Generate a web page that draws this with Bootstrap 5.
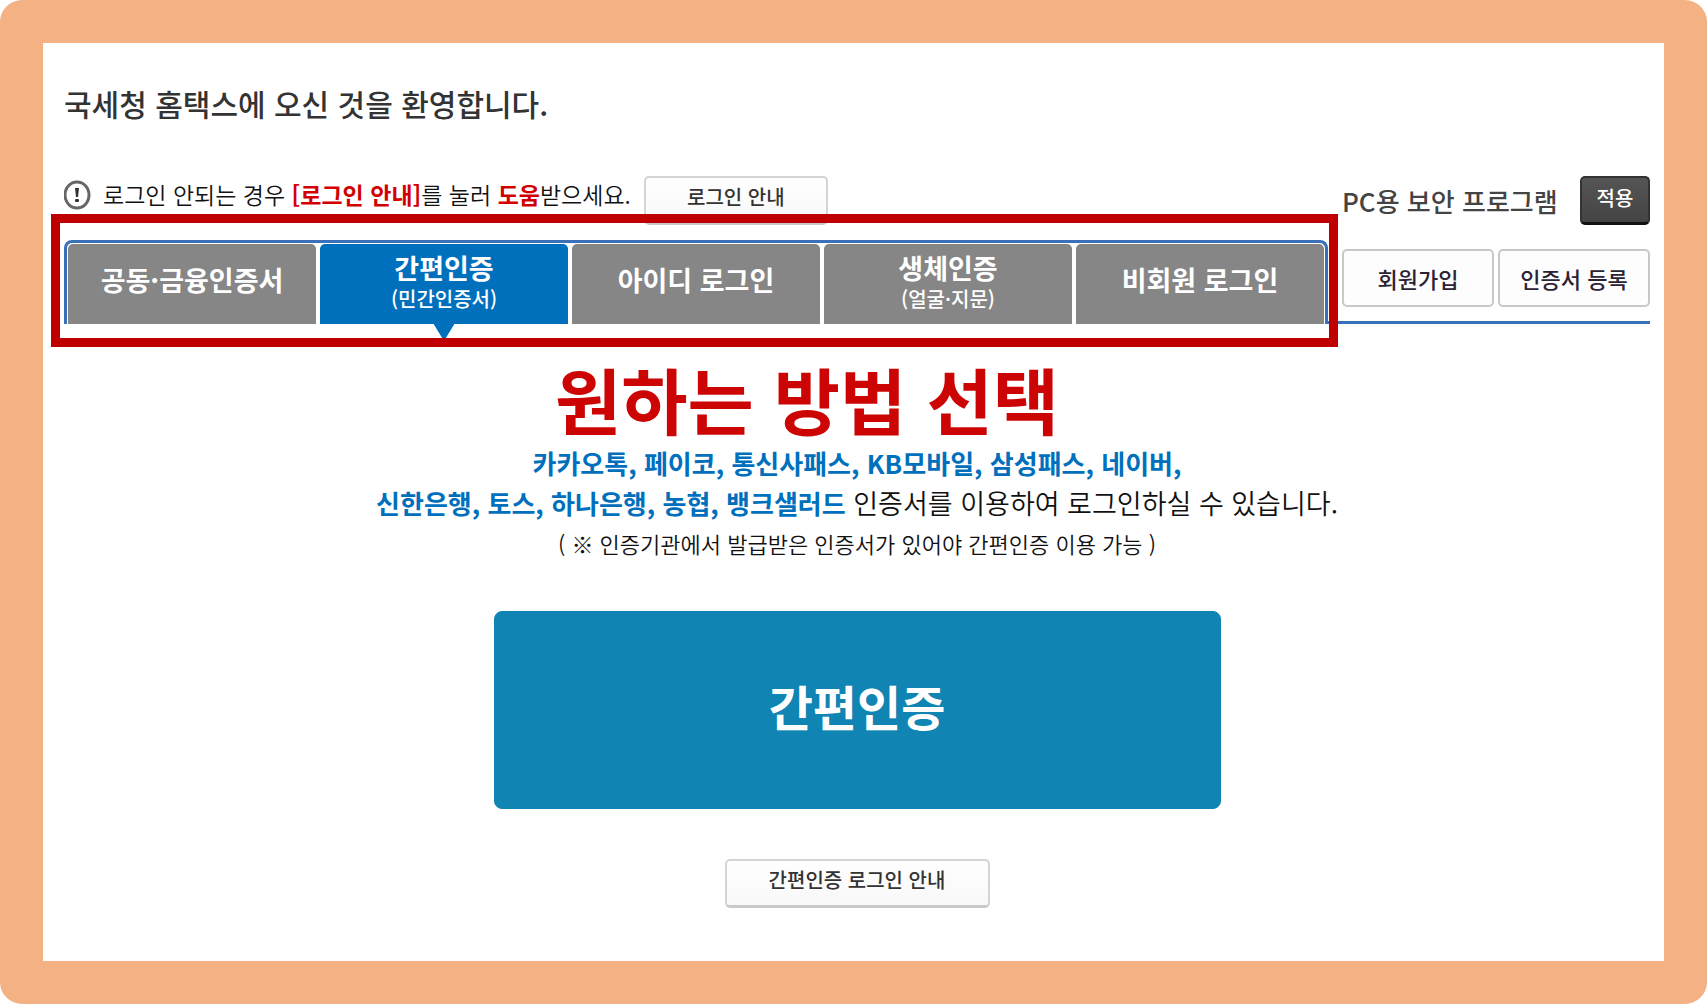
<!DOCTYPE html>
<html lang="ko">
<head>
<meta charset="utf-8">
<meta name="viewport" content="width=device-width, initial-scale=1">
<title>국세청 홈택스 로그인</title>
<link rel="stylesheet" href="https://cdn.jsdelivr.net/npm/bootstrap@5.3.0/dist/css/bootstrap.min.css">
<style>
  body { font-family: "Noto Sans CJK KR", sans-serif; color: #111; background: #fff; }
  .page-frame { border: 43px solid #f4b183; border-radius: 22px; padding: 40px 14px 48px 21px; }
  .page-title { font-size: 30px; line-height: 40px; font-weight: 500; color: #333; margin-bottom: 53px; }
  .notice-row { height: 48px; margin-bottom: 16px; }
  .notice-text { font-size: 23px; line-height: 36px; font-weight: 350; padding: 0 13px 0 10px; }
  .notice-text strong { color: #d20000; font-weight: 700; }
  .side-panel { flex: 0 0 322px; padding-left: 14px; border-bottom: 3px solid #3a70b7; }
  .side-label { font-size: 26px; line-height: 49px; font-weight: 500; color: #444; }

  .btn-plain { --bs-btn-font-size: 20px; --bs-btn-line-height: 28px; --bs-btn-font-weight: 500; --bs-btn-border-radius: 5px;
    --bs-btn-border-width: 2px; --bs-btn-color: #333; --bs-btn-border-color: #d4d4d4; --bs-btn-bg: #fdfdfd;
    --bs-btn-hover-bg: #f2f2f2; --bs-btn-hover-border-color: #bbb; --bs-btn-padding-y: 2px; }
  .btn-raised { height: 49px; padding-bottom: 8px; background-image: linear-gradient(#fff, #f8f8f8); border-bottom: 3px solid #c9c9c9; }
  .btn-side { --bs-btn-font-size: 22px; --bs-btn-padding-x: 0; --bs-btn-border-color: #c8c8c8; --bs-btn-color: #2b2233; height: 58px; }
  .btn-help { width: 184px; }
  .btn-guide { width: 265px; }
  .btn-apply { --bs-btn-font-size: 20px; --bs-btn-line-height: 28px; --bs-btn-font-weight: 500; --bs-btn-color: #fff; --bs-btn-hover-color: #fff;
    --bs-btn-border-color: #333; --bs-btn-hover-border-color: #222; --bs-btn-border-radius: 5px; --bs-btn-border-width: 2px; --bs-btn-padding-x: 0;
    width: 70px; height: 49px; padding-top: 2px; background-image: linear-gradient(#555, #444); border-bottom: 3px solid #111; }
  .btn-simple { --bs-btn-font-size: 48px; --bs-btn-line-height: 72px; --bs-btn-font-weight: 700; --bs-btn-color: #fff; --bs-btn-hover-color: #fff;
    --bs-btn-bg: #1084b2; --bs-btn-hover-bg: #0d759e; --bs-btn-border-color: #1084b2; --bs-btn-border-radius: 8px;
    width: 727px; height: 198px; padding-bottom: 16px; margin-top: 48px; margin-bottom: 50px; }

  .tab-box { height: 84px; border: 3px solid #3a70b7; border-bottom: 0; border-radius: 8px 8px 0 0; padding: 1px 1px 0; }
  .login-tabs { gap: 4px; height: 80px; }
  .login-tabs .nav-item { flex: 1 1 0; }
  .login-tabs .nav-link { height: 80px; padding: 0 0 8px; background: #868686; color: #fff; border-radius: 5px 5px 0 0; position: relative;
    font-size: 27px; line-height: 34px; font-weight: 700; }
  .login-tabs .nav-link.active { background: #0070bd; color: #fff; }
  .login-tabs .nav-link.active::after { content: ""; position: absolute; top: 79px; left: 50%; margin-left: -11px;
    border: 11px solid transparent; border-bottom: 0; border-top: 18px solid #0070bd; }
  .login-tabs .nav-link:has(.tab-note) { padding-bottom: 4px; }
  .tab-note { font-size: 20px; line-height: 28px; font-weight: 500; }
  .mark-frame { position: absolute; inset: -26px -10px -23px -13px; border: 9px solid #c00000; pointer-events: none; }

  .pick-text { font-size: 72px; line-height: 80px; font-weight: 700; color: #cc0404; margin: 34px 0 5px; padding-right: 100px; }
  .guide-text { font-size: 27px; line-height: 40px; font-weight: 350; }
  .guide-text strong { font-size: 26px; color: #0070bd; font-weight: 700; }
  .guide-note { font-size: 22px; line-height: 40px; font-weight: 350; }
</style>
</head>
<body>
<main class="page-frame min-vh-100">
  <h1 class="page-title">국세청 홈택스에 오신 것을 환영합니다.</h1>

  <div class="d-flex">
    <section class="flex-grow-1">
      <div class="notice-row d-flex align-items-start">
        <svg class="flex-shrink-0 mt-1" width="29" height="30" viewBox="0 0 29 30" aria-hidden="true">
          <ellipse cx="13" cy="15" rx="12" ry="13" fill="none" stroke="#666" stroke-width="3"/>
          <path d="M11 8h4l-1 9h-2z" fill="#333"/><rect x="11" y="19" width="4" height="3" rx="1" fill="#333"/>
        </svg>
        <p class="notice-text mb-0">로그인 안되는 경우 <strong>[로그인 안내]</strong>를 눌러 <strong>도움</strong>받으세요.</p>
        <button type="button" class="btn btn-plain btn-raised btn-help">로그인 안내</button>
      </div>
      <div class="position-relative">
        <div class="tab-box">
          <ul class="nav login-tabs flex-nowrap">
            <li class="nav-item"><a class="nav-link d-flex flex-column align-items-center justify-content-center" href="#">공동·금융인증서</a></li>
            <li class="nav-item"><a class="nav-link active d-flex flex-column align-items-center justify-content-center" href="#" aria-current="page">간편인증<span class="tab-note">(민간인증서)</span></a></li>
            <li class="nav-item"><a class="nav-link d-flex flex-column align-items-center justify-content-center" href="#">아이디 로그인</a></li>
            <li class="nav-item"><a class="nav-link d-flex flex-column align-items-center justify-content-center" href="#">생체인증<span class="tab-note">(얼굴·지문)</span></a></li>
            <li class="nav-item"><a class="nav-link d-flex flex-column align-items-center justify-content-center" href="#">비회원 로그인</a></li>
          </ul>
        </div>
        <div class="mark-frame"></div>
      </div>
    </section>

    <aside class="side-panel">
      <div class="d-flex justify-content-between align-items-start mb-4">
        <span class="side-label">PC용 보안 프로그램</span>
        <button type="button" class="btn btn-apply">적용</button>
      </div>
      <div class="d-flex gap-1">
        <button type="button" class="btn btn-plain btn-side flex-fill w-50">회원가입</button>
        <button type="button" class="btn btn-plain btn-side flex-fill w-50">인증서 등록</button>
      </div>
    </aside>
  </div>

  <section class="text-center">
    <h2 class="pick-text">원하는 방법 선택</h2>
    <p class="guide-text mb-0"><strong>카카오톡, 페이코, 통신사패스, KB모바일, 삼성패스, 네이버,</strong><br>
      <strong>신한은행, 토스, 하나은행, 농협, 뱅크샐러드</strong> 인증서를 이용하여 로그인하실 수 있습니다.</p>
    <p class="guide-note mb-0">( ※ 인증기관에서 발급받은 인증서가 있어야 간편인증 이용 가능 )</p>
    <button type="button" class="btn btn-simple">간편인증</button>
    <div><button type="button" class="btn btn-plain btn-raised btn-guide">간편인증 로그인 안내</button></div>
  </section>
</main>
<script src="https://cdn.jsdelivr.net/npm/bootstrap@5.3.0/dist/js/bootstrap.bundle.min.js"></script>
</body>
</html>
